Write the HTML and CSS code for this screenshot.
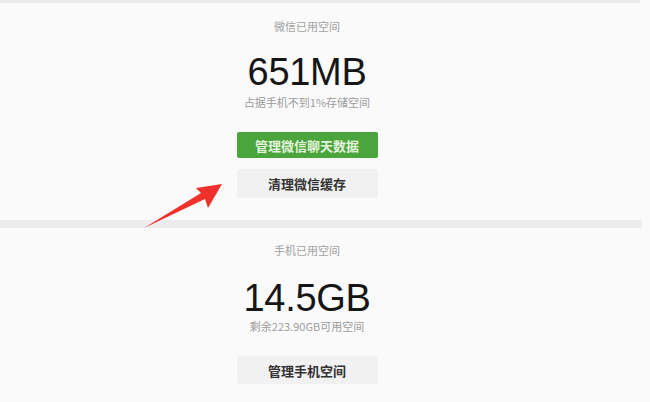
FILE: index.html
```html
<!DOCTYPE html>
<html lang="zh">
<head>
<meta charset="utf-8">
<link rel="stylesheet" href="styles.css">
</head>
<body>
<div class="page">
  <div class="topband"></div>
  <section class="card card-first">
    <div class="label">微信已用空间</div>
    <div class="amount">651MB</div>
    <div class="note">占据手机不到1%存储空间</div>
    <div class="btn btn-green">管理微信聊天数据</div>
    <div class="btn btn-gray btn-second">清理微信缓存</div>
  </section>
  <div class="divider"></div>
  <section class="card card-second">
    <div class="label">手机已用空间</div>
    <div class="amount">14.5GB</div>
    <div class="note">剩余223.90GB可用空间</div>
    <div class="btn btn-gray btn-manage">管理手机空间</div>
  </section>
  <svg class="arrow" width="90" height="52" viewBox="0 0 90 52">
    <polygon points="82,4 56,8 61,13 4,48 65,19 68,28" fill="#f0312b"/>
  </svg>
</div>
</body>
</html>
```

FILE: styles.css
```css
html, body {
  margin: 0;
  padding: 0;
  background: #fafafa;
}
body {
  width: 650px;
  height: 402px;
  overflow: hidden;
  font-family: "Liberation Sans", "Noto Sans CJK SC", sans-serif;
}
.page {
  position: relative;
  width: 650px;
  height: 402px;
}
.topband {
  width: 640px;
  height: 3px;
  background: #ebebeb;
}
.card {
  width: 614px;
  display: flex;
  flex-direction: column;
  align-items: center;
}
.card-first {
  height: 217px;
}
.label {
  font-family: "Noto Sans CJK SC", sans-serif;
  font-size: 11px;
  line-height: 16px;
  color: #a0a0a0;
  margin-top: 15px;
}
.amount {
  font-size: 38px;
  line-height: 38px;
  color: #161616;
  margin-top: 19px;
  letter-spacing: -0.3px;
}
.note {
  font-family: "Noto Sans CJK SC", sans-serif;
  font-size: 11px;
  line-height: 16px;
  color: #9c9c9c;
  margin-top: 3px;
}
.btn {
  width: 141px;
  display: flex;
  align-items: center;
  justify-content: center;
  font-family: "Noto Sans CJK SC", sans-serif;
  font-size: 13px;
  font-weight: 700;
  border-radius: 2px;
}
.btn-green {
  height: 26px;
  margin-top: 22px;
  background: #4aa63c;
  color: #e4f2de;
}
.btn-gray {
  height: 29px;
  background: #f1f1f1;
  color: #333;
}
.btn-second {
  margin-top: 11px;
}
.divider {
  width: 642px;
  height: 8px;
  background: #ececec;
}
.card-second .label {
  margin-top: 14px;
}
.card-second .amount {
  margin-top: 21px;
}
.card-second .note {
  margin-top: 1px;
}
.btn-manage {
  height: 28px;
  margin-top: 22px;
}
.arrow {
  position: absolute;
  left: 140px;
  top: 180px;
}
```
